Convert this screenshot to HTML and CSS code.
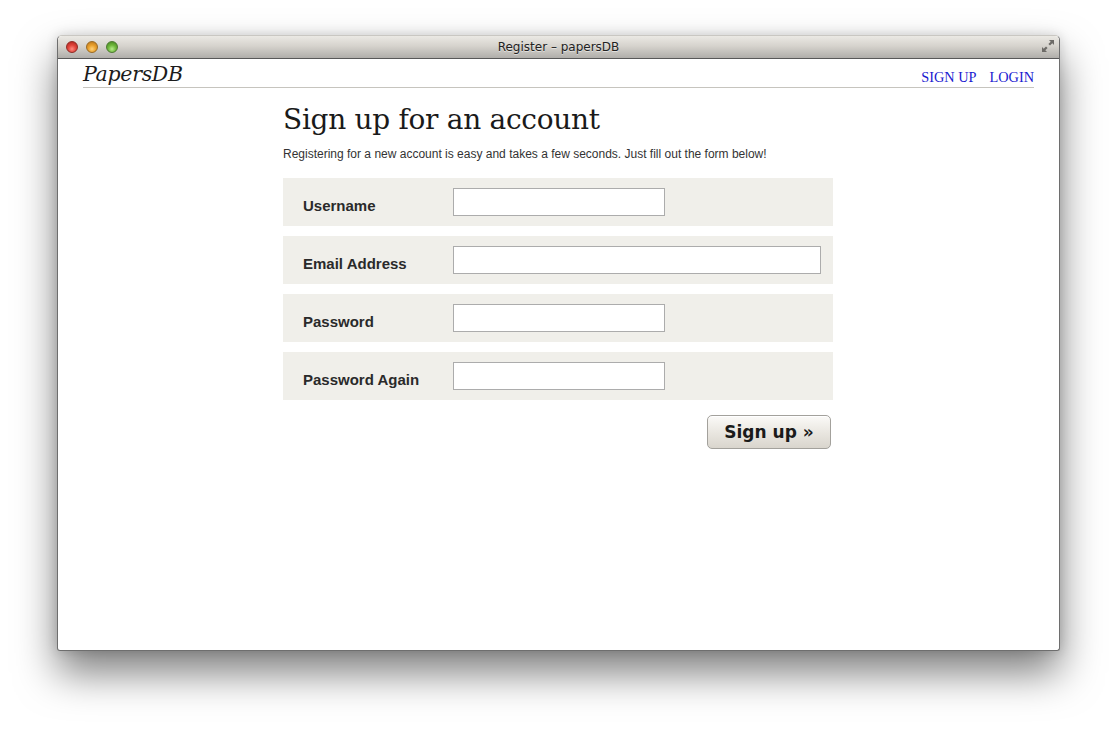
FILE: index.html
```html
<!DOCTYPE html>
<html>
<head>
<meta charset="utf-8">
<title>Register – papersDB</title>
<link rel="stylesheet" href="styles.css">
</head>
<body>
<div class="stage">
  <div class="window">
    <div class="titlebar">
      <div class="lights">
        <span class="light red"></span>
        <span class="light yellow"></span>
        <span class="light green"></span>
      </div>
      <div class="wtitle">Register – papersDB</div>
      <svg class="fullscreen" width="14" height="14" viewBox="0 0 14 14">
        <path d="M8 1 H13 V6 L11.3 4.3 L9 6.6 L7.4 5 L9.7 2.7 Z" fill="#6d6b67"/>
        <path d="M1 8 V13 H6 L4.3 11.3 L6.6 9 L5 7.4 L2.7 9.7 Z" fill="#6d6b67"/>
      </svg>
    </div>
    <div class="content">
      <header class="site-header">
        <div class="logo">PapersDB</div>
        <nav class="nav">
          <a href="#">SIGN UP</a>
          <a href="#">LOGIN</a>
        </nav>
      </header>
      <main class="main">
        <h1 class="heading">Sign up for an account</h1>
        <p class="intro">Registering for a new account is easy and takes a few seconds. Just fill out the form below!</p>
        <form class="form">
          <div class="row">
            <label class="label">Username</label>
            <input class="field" type="text">
          </div>
          <div class="row">
            <label class="label">Email Address</label>
            <input class="field wide" type="text">
          </div>
          <div class="row">
            <label class="label">Password</label>
            <input class="field" type="password">
          </div>
          <div class="row">
            <label class="label">Password Again</label>
            <input class="field" type="password">
          </div>
          <div class="actions">
            <button class="btn" type="button">Sign up »</button>
          </div>
        </form>
      </main>
    </div>
  </div>
</div>
</body>
</html>
```
FILE: styles.css
```css
html, body {
  margin: 0;
  padding: 0;
  background: #ffffff;
}
.stage {
  padding: 35px 0 0 57px;
  height: 729px;
  box-sizing: border-box;
}
.window {
  width: 1003px;
  height: 616px;
  box-sizing: border-box;
  border-radius: 5px 5px 3px 3px;
  border: 1px solid #6e6e6e;
  border-top-color: #c9c7c2;
  background: #ffffff;
  box-shadow: 0 22px 40px rgba(0, 0, 0, 0.5), 0 0 12px rgba(0,0,0,0.15);
  overflow: hidden;
}
.titlebar {
  height: 22px;
  border-bottom: 1px solid #585858;
  background: linear-gradient(#ebe9e4, #d6d3cd 45%, #b0aeaa);
  border-radius: 4px 4px 0 0;
  display: flex;
  align-items: center;
  position: relative;
}
.lights {
  display: flex;
  gap: 8px;
  padding-left: 8px;
}
.light {
  width: 12px;
  height: 12px;
  border-radius: 50%;
  box-sizing: border-box;
}
.red {
  background: radial-gradient(circle at 50% 70%, #ff8a80 0%, #e0443a 45%, #a8201a 100%);
  border: 1px solid #8f2a24;
}
.yellow {
  background: radial-gradient(circle at 50% 70%, #ffd27a 0%, #e9a02b 45%, #b3701a 100%);
  border: 1px solid #9a6a22;
}
.green {
  background: radial-gradient(circle at 50% 70%, #b6ec8c 0%, #6fb73b 45%, #3f7f1e 100%);
  border: 1px solid #4c7a30;
}
.wtitle {
  position: absolute;
  left: 0;
  right: 0;
  text-align: center;
  font-family: "DejaVu Sans", sans-serif;
  font-size: 12px;
  color: #222222;
  text-shadow: 0 1px 0 rgba(255,255,255,0.5);
}
.fullscreen {
  position: absolute;
  right: 4px;
  top: 3px;
}
.content {
  padding: 0 25px;
}
.site-header {
  display: flex;
  justify-content: space-between;
  align-items: flex-end;
  height: 29px;
  border-bottom: 1px solid #c6c4be;
  box-sizing: border-box;
}
.logo {
  font-family: "DejaVu Serif", "Liberation Serif", serif;
  font-style: italic;
  font-size: 20.5px;
  color: #1c1c1c;
  line-height: 26px;
  margin-bottom: 0;
  letter-spacing: -0.3px;
}
.nav {
  display: flex;
  gap: 13px;
  padding-bottom: 2px;
}
.nav a {
  font-family: "Liberation Serif", serif;
  font-size: 14.3px;
  color: #1a1ad0;
  text-decoration: none;
  line-height: 16px;
}
.main {
  width: 550px;
  margin: 0 0 0 200px;
}
.heading {
  font-family: "DejaVu Serif", "Liberation Serif", serif;
  font-weight: normal;
  font-size: 28px;
  color: #1a1a1a;
  margin: 13px 0 0 0;
  line-height: 38px;
  letter-spacing: -0.3px;
}
.intro {
  font-family: "Liberation Sans", Arial, sans-serif;
  font-size: 12px;
  color: #333333;
  margin: 7px 0 0 0;
  line-height: 16px;
}
.form {
  margin-top: 16px;
  display: flex;
  flex-direction: column;
  gap: 10px;
}
.row {
  background: #f0efea;
  height: 48px;
  display: flex;
  align-items: center;
  padding-left: 20px;
}
.label {
  width: 150px;
  font-family: "Liberation Sans", Arial, sans-serif;
  font-weight: bold;
  font-size: 15px;
  color: #2a2a2a;
  padding-top: 6px;
}
.field {
  width: 212px;
  height: 28px;
  box-sizing: border-box;
  border: 1px solid #acacac;
  background: #ffffff;
  margin: 0;
  padding: 2px 4px;
}
.field.wide {
  width: 368px;
}
.actions {
  display: flex;
  justify-content: flex-end;
  padding-right: 2px;
  margin-top: 5px;
}
.btn {
  width: 124px;
  height: 34px;
  border-radius: 5px;
  border: 1px solid #a3a19c;
  background: linear-gradient(#fbfaf8, #eae7e1 50%, #d9d5cd);
  box-shadow: inset 0 1px 0 #ffffff;
  font-family: "DejaVu Sans", sans-serif;
  font-weight: bold;
  font-size: 17px;
  color: #1a1a1a;
  padding: 0;
}
```
